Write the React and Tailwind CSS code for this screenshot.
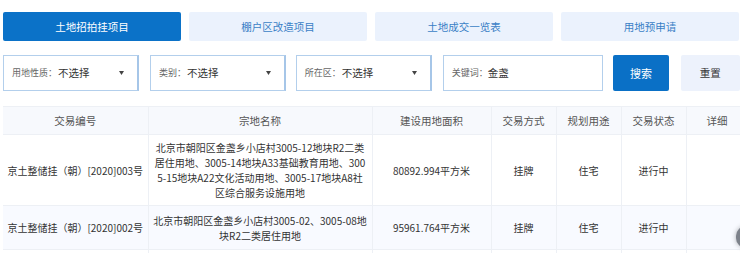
const tabs = ['土地招拍挂项目', '棚户区改造项目', '土地成交一览表', '用地预申请'];

const rows = [
  {
    code: '京土整储挂（朝）[2020]003号',
    lines: [
      '北京市朝阳区金盏乡小店村3005-12地块R2二类',
      '居住用地、3005-14地块A33基础教育用地、300',
      '5-15地块A22文化活动用地、3005-17地块A8社',
      '区综合服务设施用地',
    ],
    area: '80892.994平方米',
    h: 'h-[71px]',
    bg: 'bg-white',
  },
  {
    code: '京土整储挂（朝）[2020]002号',
    lines: ['北京市朝阳区金盏乡小店村3005-02、3005-08地', '块R2二类居住用地'],
    area: '95961.764平方米',
    h: 'h-[44px]',
    bg: 'bg-[#f8faff]',
  },
];

const SelectBox = ({ label, className }) => (
  <div className={`flex items-center h-full border border-[#b3cfec] border-r-2 border-r-[#a6c6e8] bg-white pl-[8px] pr-[13px] ${className}`}>
    <span className="text-[9px] text-[#666]">{label}：</span>
    <span className="ml-[1px] text-[10.5px] text-[#333]">不选择</span>
    <svg className="ml-auto w-[5px] h-[4px]" viewBox="0 0 5 4">
      <path d="M0 0h5L2.5 4z" fill="#444" />
    </svg>
  </div>
);

export default function App() {
  return (
    <div
      className="relative w-[740px] h-[253px] overflow-hidden bg-white pl-[3px]"
      style={{ fontFamily: '"Noto Sans CJK SC", "Noto Sans", sans-serif' }}
    >
      {/* Tabs */}
      <div className="mt-[12px] flex gap-[8px] w-[736px]">
        {tabs.map((t, i) => (
          <div
            key={t}
            className={`flex-1 h-[29px] rounded-[2px] flex items-center justify-center text-[10.5px] ${
              i === 0 ? 'bg-[#0b72c8] text-white' : 'bg-[#ebf2fd] text-[#3a7fc6]'
            }`}
          >
            {t}
          </div>
        ))}
      </div>

      {/* Filters */}
      <div className="mt-[14px] flex items-stretch h-[36px]">
        <SelectBox label="用地性质" className="w-[137px]" />
        <SelectBox label="类别" className="w-[137px] ml-[11px]" />
        <SelectBox label="所在区" className="w-[137px] ml-[10px]" />
        <div className="ml-[11px] w-[162px] flex items-center border border-[#b3cfec] bg-white pl-[8px]">
          <span className="text-[9px] text-[#666]">关键词：</span>
          <span className="text-[10.5px] text-[#333]">金盏</span>
        </div>
        <button className="ml-[10px] w-[56px] rounded-[2px] bg-[#0a70c6] text-white text-[11px]">搜索</button>
        <button className="ml-[12px] w-[60px] rounded-[2px] bg-[#edf2fc] text-[#333] text-[10.5px]">重置</button>
      </div>

      {/* Table */}
      <table className="mt-[15px] table-fixed border-collapse w-[745px] text-[10px]">
        <colgroup>
          <col className="w-[145px]" />
          <col className="w-[224px]" />
          <col className="w-[119px]" />
          <col className="w-[65px]" />
          <col className="w-[65px]" />
          <col className="w-[65px]" />
          <col className="w-[62px]" />
        </colgroup>
        <thead>
          <tr className="h-[28px] bg-[#f7f9fd] text-[#555] text-[10.5px]">
            {['交易编号', '宗地名称', '建设用地面积', '交易方式', '规划用途', '交易状态', '详细'].map((h) => (
              <th key={h} className="font-normal border border-[#edf0f5] border-l-0">
                {h}
              </th>
            ))}
          </tr>
        </thead>
        <tbody className="text-[#333]">
          {rows.map((r) => (
            <tr key={r.code} className={`${r.h} ${r.bg}`}>
              <td className="border border-[#edf0f5] border-l-0 px-[2px] whitespace-nowrap text-center">{r.code}</td>
              <td className="border border-[#edf0f5] px-[2px] text-center leading-[15px]">
                {r.lines.map((l) => (
                  <div key={l} className="whitespace-nowrap">
                    {l}
                  </div>
                ))}
              </td>
              <td className="border border-[#edf0f5] text-center">{r.area}</td>
              <td className="border border-[#edf0f5] text-center">挂牌</td>
              <td className="border border-[#edf0f5] text-center">住宅</td>
              <td className="border border-[#edf0f5] text-center">进行中</td>
              <td className="border border-[#edf0f5] text-center"></td>
            </tr>
          ))}
          <tr className="h-[20px]">
            {Array.from({ length: 7 }).map((_, i) => (
              <td key={i} className={`border border-[#edf0f5] ${i === 0 ? 'border-l-0' : ''}`}></td>
            ))}
          </tr>
        </tbody>
      </table>

      {/* floating button edge */}
      <div className="absolute right-[-16px] top-[226px] w-[20px] h-[22px] rounded-full bg-[#7d828b] shadow-[0_0_5px_rgba(0,0,0,0.3)]" />
    </div>
  );
}
